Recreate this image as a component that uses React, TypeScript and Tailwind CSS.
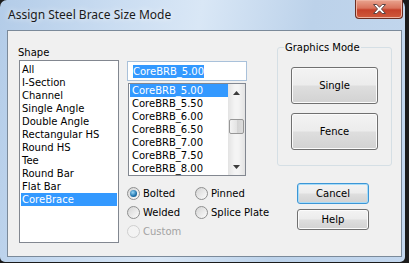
import React from 'react'

const shapes = [
  'All',
  'I-Section',
  'Channel',
  'Single Angle',
  'Double Angle',
  'Rectangular HS',
  'Round HS',
  'Tee',
  'Round Bar',
  'Flat Bar',
  'CoreBrace',
]

const sizes = ['5.00', '5.50', '6.00', '6.50', '7.00', '7.50', '8.00']

function Radio({ label, checked, disabled }: { label: string; checked?: boolean; disabled?: boolean }) {
  return (
    <div className="flex items-center gap-[3px] h-[19px] whitespace-nowrap">
      <span
        className={`w-[13px] h-[13px] rounded-full border flex items-center justify-center ${
          disabled
            ? 'border-[#cfcfcf] bg-[#f3f3f3]'
            : 'border-[#8e8f8f] bg-[linear-gradient(135deg,#d4d4d4,#fcfcfc)]'
        }`}
      >
        {checked && (
          <span className="w-[7px] h-[7px] rounded-full bg-[radial-gradient(circle_at_40%_35%,#9ad8f8,#1d72ac_60%,#0b456f)]" />
        )}
      </span>
      <span className={disabled ? 'text-[#a3a3a3]' : 'text-black'}>{label}</span>
    </div>
  )
}

function Btn({ label, def, className }: { label: string; def?: boolean; className: string }) {
  return (
    <div
      className={`flex items-center justify-center rounded-[3px] border ${
        def
          ? 'border-[#3c96d6] shadow-[inset_0_0_0_1px_#a8dcf8]'
          : 'border-[#707070] shadow-[inset_0_0_0_1px_#fbfbfb]'
      } bg-[linear-gradient(#f3f3f3_0%,#ececec_48%,#dedede_52%,#d2d2d2_100%)] text-black ${className}`}
    >
      {label}
    </div>
  )
}

function Arrow({ up }: { up?: boolean }) {
  return (
    <svg width="7" height="4" viewBox="0 0 7 4">
      <path d={up ? 'M0 4 L3.5 0 L7 4 Z' : 'M0 0 L3.5 4 L7 0 Z'} fill="#3c3c3c" />
    </svg>
  )
}

export default function App() {
  return (
    <div className="w-[409px] h-[263px] bg-[#1b1b1b] overflow-hidden">
      <div
        className="w-[405px] h-[262px] rounded-t-[7px] rounded-b-[5px] flex flex-col bg-[linear-gradient(100deg,#b3cce8_0%,#c9dcf1_25%,#d9e7f6_45%,#bcd2ea_70%,#c3d7ee_100%)]"
        style={{ fontFamily: '"DejaVu Sans", Tahoma, sans-serif', fontSize: '10px' }}
      >
        {/* title bar */}
        <div className="h-[30px] flex items-start justify-between">
          <span
            className="ml-[8px] mt-[6px] text-[12px] text-[#1a1a1a] [text-shadow:0_0_6px_#ffffff]"
            style={{ fontFamily: '"Noto Sans", "Open Sans", sans-serif' }}
          >
            Assign Steel Brace Size Mode
          </span>
          <div className="mr-[2px] w-[48px] h-[19px] rounded-b-[4px] border border-t-0 border-[#6b2e22] bg-[linear-gradient(#e9a48f_0%,#d9735c_45%,#c5412a_55%,#cf5a3c_100%)] shadow-[inset_0_0_0_1px_#efb2a0] flex items-center justify-center">
            <svg width="13" height="10" viewBox="0 0 13 10">
              <path
                d="M0.5 0.5 L3.8 0.5 L6.5 3.2 L9.2 0.5 L12.5 0.5 L8.5 5 L12.5 9.5 L9.2 9.5 L6.5 6.8 L3.8 9.5 L0.5 9.5 L4.5 5 Z"
                fill="#ffffff"
                stroke="#5a4444"
                strokeWidth="1"
              />
            </svg>
          </div>
        </div>

        {/* client area */}
        <div className="ml-[7px] mr-[3px] h-[227px] border border-[#7b8a9a] bg-[#f0f0f0] flex">
          {/* shape column */}
          <div className="ml-[11px] w-[100px] flex flex-col pt-[15px]">
            <div className="h-[13px] mb-[1px] -ml-[1px] leading-[13px] text-black">Shape</div>
            <div className="h-[183px] border border-[#828790] bg-white pt-[2px] px-[1px]">
              {shapes.map((s) => (
                <div
                  key={s}
                  className={`h-[13px] leading-[13px] pl-[1px] ${
                    s === 'CoreBrace' ? 'bg-[#3399ff] text-white' : 'text-black'
                  }`}
                >
                  {s}
                </div>
              ))}
            </div>
          </div>

          {/* size column */}
          <div className="ml-[8px] w-[120px] flex flex-col pt-[30px]">
            <div className="h-[20px] border border-[#a9c1da] bg-white flex items-center pl-[5px]">
              <span className="bg-[#3399ff] text-white h-[13px] leading-[13px]">CoreBRB_5.00</span>
            </div>
            <div className="ml-[1px] mt-[2px] w-[118px] h-[93px] border border-[#828790] bg-white flex">
              <div className="flex-1 pl-[1px]">
                {sizes.map((s, i) => (
                  <div
                    key={s}
                    className={`h-[13px] leading-[13px] pl-[2px] ${
                      i === 0 ? 'bg-[#3399ff] text-white' : 'text-black'
                    }`}
                  >
                    CoreBRB_{s}
                  </div>
                ))}
              </div>
              <div className="w-[17px] flex flex-col bg-[linear-gradient(90deg,#e3e3e3,#f4f4f4_40%,#f4f4f4_60%,#e3e3e3)]">
                <div className="h-[17px] flex items-center justify-center">
                  <Arrow up />
                </div>
                <div className="mt-[18px] mx-[1px] h-[15px] rounded-[2px] border border-[#979797] bg-[linear-gradient(90deg,#f3f3f3,#e4e4e4_50%,#d4d4d4_55%,#dcdcdc)]" />
                <div className="flex-1" />
                <div className="h-[17px] flex items-center justify-center">
                  <Arrow />
                </div>
              </div>
            </div>
            <div className="mt-[8px] flex">
              <div className="w-[68px] shrink-0 flex flex-col">
                <Radio label="Bolted" checked />
                <Radio label="Welded" />
                <Radio label="Custom" disabled />
              </div>
              <div className="flex flex-col">
                <Radio label="Pinned" />
                <Radio label="Splice Plate" />
              </div>
            </div>
          </div>

          {/* right column */}
          <div className="ml-[30px] w-[114px] flex flex-col pt-[10px]">
            <fieldset className="block h-[125px] border border-[#d5dfe5] rounded-[3px] p-0">
              <legend className="ml-[6px] px-[1px] h-[13px] leading-[13px] text-black">Graphics Mode</legend>
              <div className="px-[13px] mt-[13px] flex flex-col gap-[9px]">
                <Btn label="Single" className="w-[87px] h-[37px]" />
                <Btn label="Fence" className="w-[87px] h-[37px]" />
              </div>
            </fieldset>
            <div className="ml-[20px] mt-[17px] flex flex-col gap-[5px]">
              <Btn label="Cancel" def className="w-[72px] h-[21px]" />
              <Btn label="Help" className="w-[72px] h-[21px]" />
            </div>
          </div>
        </div>
      </div>
    </div>
  )
}
